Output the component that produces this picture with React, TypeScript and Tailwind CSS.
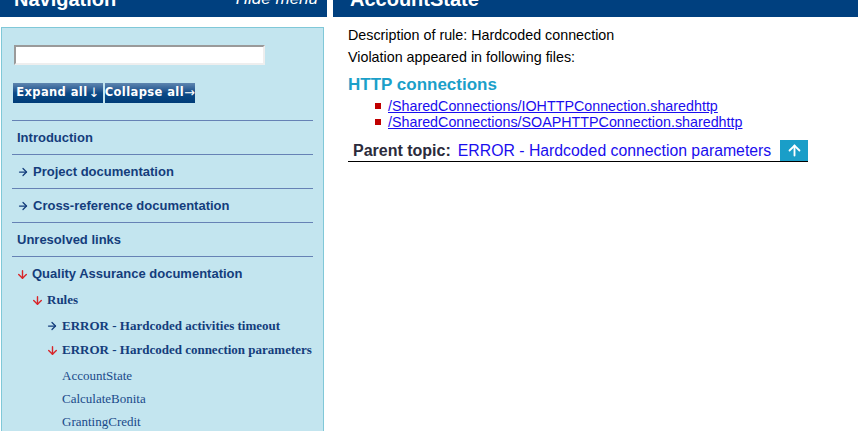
import { ArrowRight, ArrowDown, ArrowUp } from 'lucide-react';

const sans = "font-['Liberation_Sans',Arial,sans-serif]";
const serif = "font-['Liberation_Serif','Times_New_Roman',serif]";

function NavRow({ label, arrow }: { label: string; arrow?: boolean }) {
  return (
    <div className="h-[34px] border-b border-[#6682b5] flex items-center pl-[5px] gap-[4px] text-[13px] font-bold text-[#143d7c]">
      {arrow && <ArrowRight size={12} strokeWidth={2.5} className="text-[#143d7c]" />}
      <span>{label}</span>
    </div>
  );
}

function Down() {
  return <ArrowDown size={13} strokeWidth={2.6} className="text-[#d8262a] shrink-0" />;
}

export default function App() {
  const subs = ['AccountState', 'CalculateBonita', 'GrantingCredit'];
  return (
    <div className={`w-[858px] h-[431px] overflow-hidden bg-white flex ${sans}`}>
      {/* left: navigation */}
      <div className="w-[327px] shrink-0 flex flex-col">
        <div className="h-[17px] shrink-0 bg-[#00407f] flex items-end justify-between px-[14px] overflow-hidden">
          <span className="text-white font-bold text-[20px] leading-[20px] mb-[8px]">Navigation</span>
          <span className="text-white italic text-[17px] leading-[20px] mb-[8px] mr-[-5px]">Hide menu</span>
        </div>
        <div className="mt-[10px] ml-[1px] w-[323px] h-[500px] shrink-0 bg-[#c3e5ef] border border-[#80c8d8] pt-[17px] pl-[10px]">
          <input
            type="text"
            className="block ml-[2px] w-[251px] h-[20px] bg-white border-2 border-t-[#9a9a9a] border-l-[#9a9a9a] border-r-[#eeeeee] border-b-[#eeeeee] outline-none"
          />
          <div className="flex gap-[2px] ml-[1px] mt-[18px] font-['DejaVu_Sans',sans-serif]">
            <button className="w-[90px] h-[20px] bg-gradient-to-b from-[#5f86b0] via-[#0d4a87] to-[#003c78] text-white text-[11.5px] font-bold tracking-[0.4px] whitespace-nowrap flex items-center justify-center gap-[1px]">
              Expand all<span className="text-[13px] font-normal">↓</span>
            </button>
            <button className="w-[90px] h-[20px] bg-gradient-to-b from-[#5f86b0] via-[#0d4a87] to-[#003c78] text-white text-[11.5px] font-bold tracking-[0.4px] whitespace-nowrap flex items-center justify-center">
              Collapse all<span className="text-[13px] font-normal">→</span>
            </button>
          </div>
          <div className="mt-[17px] w-[301px] border-t border-[#6682b5]">
            <NavRow label="Introduction" />
            <NavRow label="Project documentation" arrow />
            <NavRow label="Cross-reference documentation" arrow />
            <NavRow label="Unresolved links" />
          </div>
          <div className="pl-[4px] text-[#143d7c]">
            <div className="h-[34px] flex items-center gap-[3px] text-[13px] font-bold">
              <Down />
              <span>Quality Assurance documentation</span>
            </div>
            <div className={`pl-[15px] ${serif} text-[13px]`}>
              <div className="h-[18px] flex items-center gap-[3px] font-bold">
                <Down />
                <span>Rules</span>
              </div>
              <div className="pl-[15px] mt-[8px]">
                <div className="h-[18px] flex items-center gap-[4px] font-bold">
                  <ArrowRight size={12} strokeWidth={2.5} className="shrink-0" />
                  <span>ERROR - Hardcoded activities timeout</span>
                </div>
                <div className="h-[18px] mt-[6px] flex items-center gap-[3px] font-bold">
                  <Down />
                  <span>ERROR - Hardcoded connection parameters</span>
                </div>
                <div className="pl-[16px] mt-[5px] text-[#1a4a8a]">
                  {subs.map((s) => (
                    <div key={s} className="h-[23px] flex items-center">
                      {s}
                    </div>
                  ))}
                </div>
              </div>
            </div>
          </div>
        </div>
      </div>

      {/* right: topic */}
      <div className="flex-1 ml-[6px] flex flex-col">
        <div className="h-[17px] shrink-0 bg-[#00407f] flex items-end px-[17px] overflow-hidden">
          <span className="text-white font-bold text-[20px] leading-[20px] mb-[8px]">AccountState</span>
        </div>
        <div className="pl-[15px] pt-[7px] text-[14.3px] text-black">
          <p className="leading-[22px]">Description of rule: Hardcoded connection</p>
          <p className="leading-[22px]">Violation appeared in following files:</p>
          <h2 className="mt-[7px] text-[17px] leading-[20px] font-bold text-[#1ba0c9]">HTTP connections</h2>
          <ul className="mt-[3px] pl-[27px]">
            {['/SharedConnections/IOHTTPConnection.sharedhttp', '/SharedConnections/SOAPHTTPConnection.sharedhttp'].map((f) => (
              <li key={f} className="h-[16px] flex items-center gap-[7px]">
                <span className="w-[6px] h-[6px] bg-[#c00000] shrink-0" />
                <a className="text-[#1a0dee] underline leading-[16px]">{f}</a>
              </li>
            ))}
          </ul>
          <div className="mt-[10px] inline-flex items-center h-[22px] border-b border-black pl-[5px] text-[16px]">
            <span className="font-bold text-[#2b2b3b]">Parent topic:</span>
            <a className="ml-[7px] text-[#1a0dee] text-[15.8px]">ERROR - Hardcoded connection parameters</a>
            <span className="ml-[9px] w-[28px] h-[21px] bg-[#1a9ec8] flex items-center justify-center">
              <ArrowUp size={17} strokeWidth={2.6} className="text-white" />
            </span>
          </div>
        </div>
      </div>
    </div>
  );
}
